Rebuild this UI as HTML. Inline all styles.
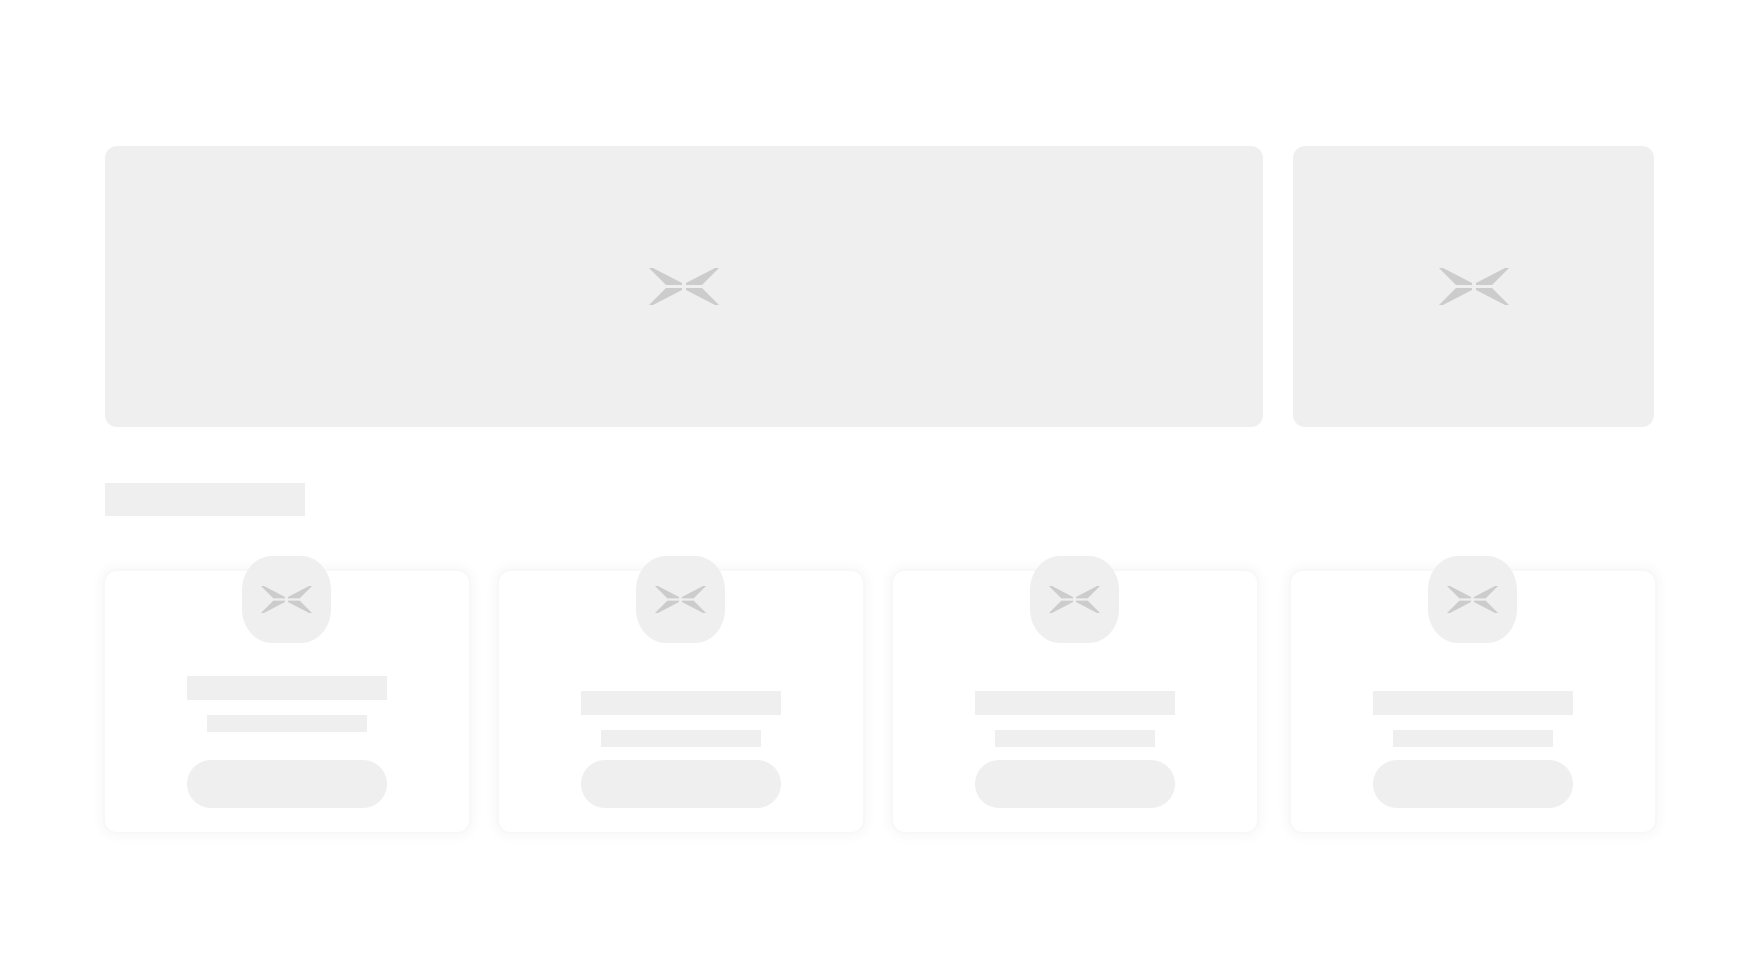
<!DOCTYPE html>
<html><head><meta charset="utf-8"><style>
*{margin:0;padding:0;box-sizing:border-box}
body{width:1760px;height:956px;background:#fff;position:relative;overflow:hidden;font-family:"Liberation Sans",sans-serif}
.ph{position:absolute;background:#efefef}
.banner{border-radius:12px;display:flex;align-items:center;justify-content:center}
.card{position:absolute;top:571px;height:261px;width:364px;background:#fff;border-radius:12px;box-shadow:0 0 0 2px #f8f8f8,0 0 10px 6px #f9f9f9}
.icon{position:absolute;top:-15px;left:137px;width:89px;height:87px;border-radius:30px/34px;background:#efefef;display:flex;align-items:center;justify-content:center}
.b1{position:absolute;left:82px;width:200px;height:24px;background:#efefef}
.b2{position:absolute;left:102px;width:160px;height:17px;background:#efefef}
.btn{position:absolute;left:82px;top:189px;width:200px;height:48px;border-radius:24px;background:#efefef}
</style></head><body>
<svg width="0" height="0" style="position:absolute"><defs>
<g id="lg" fill="#cccccc">
<polygon points="0,0 4,0 33,15 33,17 17,17"/>
<polygon points="0,37 4,37 33,22 33,20 17,20"/>
<polygon points="70,0 66,0 37,15 37,17 53,17"/>
<polygon points="70,37 66,37 37,22 37,20 53,20"/>
</g></defs></svg>
<div class="ph banner" style="left:105px;top:146px;width:1158px;height:281px"><svg width="70" height="37" viewBox="0 0 70 37"><use href="#lg"/></svg></div>
<div class="ph banner" style="left:1293px;top:146px;width:361px;height:281px"><svg width="70" height="37" viewBox="0 0 70 37"><use href="#lg"/></svg></div>
<div class="ph" style="left:105px;top:483px;width:200px;height:33px"></div>

<div class="card" style="left:105px"><div class="icon"><svg width="51" height="27" viewBox="0 0 70 37"><use href="#lg"/></svg></div>
<div class="b1" style="top:105px"></div><div class="b2" style="top:144px"></div><div class="btn"></div></div>
<div class="card" style="left:499px"><div class="icon"><svg width="51" height="27" viewBox="0 0 70 37"><use href="#lg"/></svg></div>
<div class="b1" style="top:120px"></div><div class="b2" style="top:159px"></div><div class="btn"></div></div>
<div class="card" style="left:893px"><div class="icon"><svg width="51" height="27" viewBox="0 0 70 37"><use href="#lg"/></svg></div>
<div class="b1" style="top:120px"></div><div class="b2" style="top:159px"></div><div class="btn"></div></div>
<div class="card" style="left:1291px"><div class="icon"><svg width="51" height="27" viewBox="0 0 70 37"><use href="#lg"/></svg></div>
<div class="b1" style="top:120px"></div><div class="b2" style="top:159px"></div><div class="btn"></div></div>
</body></html>
